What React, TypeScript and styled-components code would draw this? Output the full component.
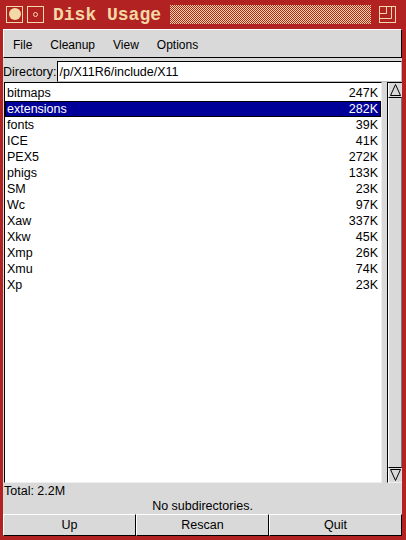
import React from 'react';
import styled, { createGlobalStyle } from 'styled-components';

const RED = '#b22222';
const WHEAT = '#f2d9a6';
const GREY = '#d9d9d9';

const GlobalStyle = createGlobalStyle`
    html, body {
        margin: 0;
        padding: 0;
        background: ${RED};
    }
    * {
        box-sizing: border-box;
    }
`

const Window = styled.div`
    width: 406px;
    height: 540px;
    display: flex;
    flex-direction: column;
    background: ${RED};
    padding: 0 4px 4px 3px;
    font-family: "Liberation Sans", Arial, sans-serif;
    font-size: 12px;
    color: #000;
`

const TitleBar = styled.div`
    height: 29px;
    display: flex;
    align-items: center;
    padding: 0 0 0 3px;
`

const TitleButton = styled.div`
    width: 17px;
    height: 17px;
    border: 1px solid ${WHEAT};
    display: flex;
    align-items: center;
    justify-content: center;
    margin-right: 4px;
    margin-top: -1px;
`

const Dot = styled.div<{ size: number, ring?: boolean }>`
    width: ${({ size }) => size}px;
    height: ${({ size }) => size}px;
    border-radius: 50%;
    background: ${({ ring }) => ring ? 'transparent' : WHEAT};
    border: ${({ ring }) => ring ? `1px solid ${WHEAT}` : 'none'};
`

const Title = styled.div`
    font-family: "Liberation Mono", "Courier New", monospace;
    font-weight: bold;
    font-size: 18px;
    color: ${WHEAT};
    margin: 0 9px 0 5px;
    line-height: 18px;
`

const Checker = styled.svg`
    flex: 1;
    height: 19px;
    margin-top: -1px;
    display: block;
`

const MaxButton = styled.svg`
    margin: -1px 6px 0 8px;
    display: block;
`

const Body = styled.div`
    flex: 1;
    display: flex;
    flex-direction: column;
    background: ${GREY};
    min-height: 0;
`

const MenuBar = styled.div`
    height: 29px;
    display: flex;
    align-items: center;
    border-top: 1px solid #fff;
    border-left: 1px solid #fff;
    border-bottom: 1px solid #000;
    border-right: 1px solid #000;
    padding-left: 1px;
`

const MenuItem = styled.div`
    padding: 0 9px 0 8px;
    margin-right: 1px;
    font-size: 12px;
    margin-top: 2px;
`

const DirRow = styled.div`
    height: 24px;
    display: flex;
    align-items: center;
    padding: 3px 0 0 0;
`

const DirLabel = styled.div`
    font-size: 12.5px;
    margin-right: 1px;
`

const DirInput = styled.div`
    flex: 1;
    height: 21px;
    background: #fff;
    border-top: 1px solid #000;
    border-left: 1px solid #000;
    border-bottom: 1px solid #bbb;
    border-right: 1px solid #bbb;
    font-size: 12.5px;
    display: flex;
    align-items: center;
    padding-left: 1px;
`

const ListArea = styled.div`
    flex: 1;
    display: flex;
    min-height: 0;
    padding-left: 1px;
`

const List = styled.div`
    flex: 1;
    background: #fff;
    border-top: 1px solid #000;
    border-left: 1px solid #000;
    border-bottom: 1px solid #eee;
    border-right: 1px solid #eee;
    padding: 2px 0 0 0;
    margin-right: 5px;
`

const Row = styled.div<{ selected?: boolean }>`
    height: 16px;
    display: flex;
    justify-content: space-between;
    align-items: center;
    padding: 0 2px 0 1px;
    font-size: 12.5px;
    background: ${({ selected }) => selected ? '#000099' : 'transparent'};
    color: ${({ selected }) => selected ? '#fff' : '#000'};
    border: 1px solid ${({ selected }) => selected ? '#000' : 'transparent'};
`

const Scrollbar = styled.div`
    width: 15px;
    display: flex;
    flex-direction: column;
    border-top: 1px solid #000;
    border-left: 1px solid #000;
    border-bottom: 1px solid #eee;
    background: ${GREY};
`

const ArrowBox = styled.div`
    height: 14px;
    display: flex;
    align-items: center;
    justify-content: center;
    border-left: 1px solid #fff;
`

const Thumb = styled.div`
    flex: 1;
    border-top: 1px solid #000;
    border-bottom: 1px solid #000;
    border-left: 1px solid #fff;
    border-right: 1px solid #777;
`

const Total = styled.div`
    height: 15px;
    font-size: 12.5px;
    padding-left: 1px;
    display: flex;
    align-items: center;
    padding-top: 1px;
`

const Status = styled.div`
    height: 16px;
    font-size: 12.5px;
    text-align: center;
    line-height: 16px;
`

const ButtonRow = styled.div`
    height: 22px;
    display: grid;
    grid-template-columns: 1fr 1fr 1fr;
`

const Button = styled.div`
    display: flex;
    align-items: center;
    justify-content: center;
    font-size: 12.5px;
    border-top: 1px solid #fff;
    border-left: 1px solid #fff;
    border-bottom: 1px solid #000;
    border-right: 1px solid #000;
`

const entries = [
    { name: 'bitmaps', size: '247K' },
    { name: 'extensions', size: '282K', selected: true },
    { name: 'fonts', size: '39K' },
    { name: 'ICE', size: '41K' },
    { name: 'PEX5', size: '272K' },
    { name: 'phigs', size: '133K' },
    { name: 'SM', size: '23K' },
    { name: 'Wc', size: '97K' },
    { name: 'Xaw', size: '337K' },
    { name: 'Xkw', size: '45K' },
    { name: 'Xmp', size: '26K' },
    { name: 'Xmu', size: '74K' },
    { name: 'Xp', size: '23K' },
]

const Arrow = ({ down }: { down?: boolean }) => (
    <svg width="11" height="12" viewBox="0 0 11 12">
        <path
            d={down ? 'M0.5 0.5 H10.5 L5.5 11.5 Z' : 'M5.5 0.5 L10.5 11.5 H0.5 Z'}
            fill="none"
            stroke="#000"
            strokeWidth="1"
        />
    </svg>
)

export default function App() {
    return (
        <>
            <GlobalStyle/>
            <Window>
                <TitleBar>
                    <TitleButton><Dot size={12}/></TitleButton>
                    <TitleButton><Dot size={5} ring/></TitleButton>
                    <Title>Disk Usage</Title>
                    <Checker shapeRendering="crispEdges">
                        <defs>
                            <pattern id="chk" width="2" height="2" patternUnits="userSpaceOnUse">
                                <rect width="2" height="2" fill={RED}/>
                                <rect width="1" height="1" fill={WHEAT}/>
                                <rect x="1" y="1" width="1" height="1" fill={WHEAT}/>
                            </pattern>
                        </defs>
                        <rect width="100%" height="100%" fill="url(#chk)"/>
                    </Checker>
                    <MaxButton width="17" height="17" viewBox="0 0 17 17">
                        <g fill="none" stroke={WHEAT} strokeWidth="1">
                            <rect x="0.5" y="0.5" width="16" height="16"/>
                            <path d="M12.5 0.5 V12.5 H0.5"/>
                            <path d="M7.5 0.5 V7.5 H0.5"/>
                        </g>
                    </MaxButton>
                </TitleBar>
                <Body>
                    <MenuBar>
                        <MenuItem>File</MenuItem>
                        <MenuItem>Cleanup</MenuItem>
                        <MenuItem>View</MenuItem>
                        <MenuItem>Options</MenuItem>
                    </MenuBar>
                    <DirRow>
                        <DirLabel>Directory:</DirLabel>
                        <DirInput>/p/X11R6/include/X11</DirInput>
                    </DirRow>
                    <ListArea>
                        <List>
                            {entries.map(e => (
                                <Row key={e.name} selected={e.selected}>
                                    <span>{e.name}</span>
                                    <span>{e.size}</span>
                                </Row>
                            ))}
                        </List>
                        <Scrollbar>
                            <ArrowBox><Arrow/></ArrowBox>
                            <Thumb/>
                            <ArrowBox><Arrow down/></ArrowBox>
                        </Scrollbar>
                    </ListArea>
                    <Total>Total: 2.2M</Total>
                    <Status>No subdirectories.</Status>
                    <ButtonRow>
                        <Button>Up</Button>
                        <Button>Rescan</Button>
                        <Button>Quit</Button>
                    </ButtonRow>
                </Body>
            </Window>
        </>
    )
}
